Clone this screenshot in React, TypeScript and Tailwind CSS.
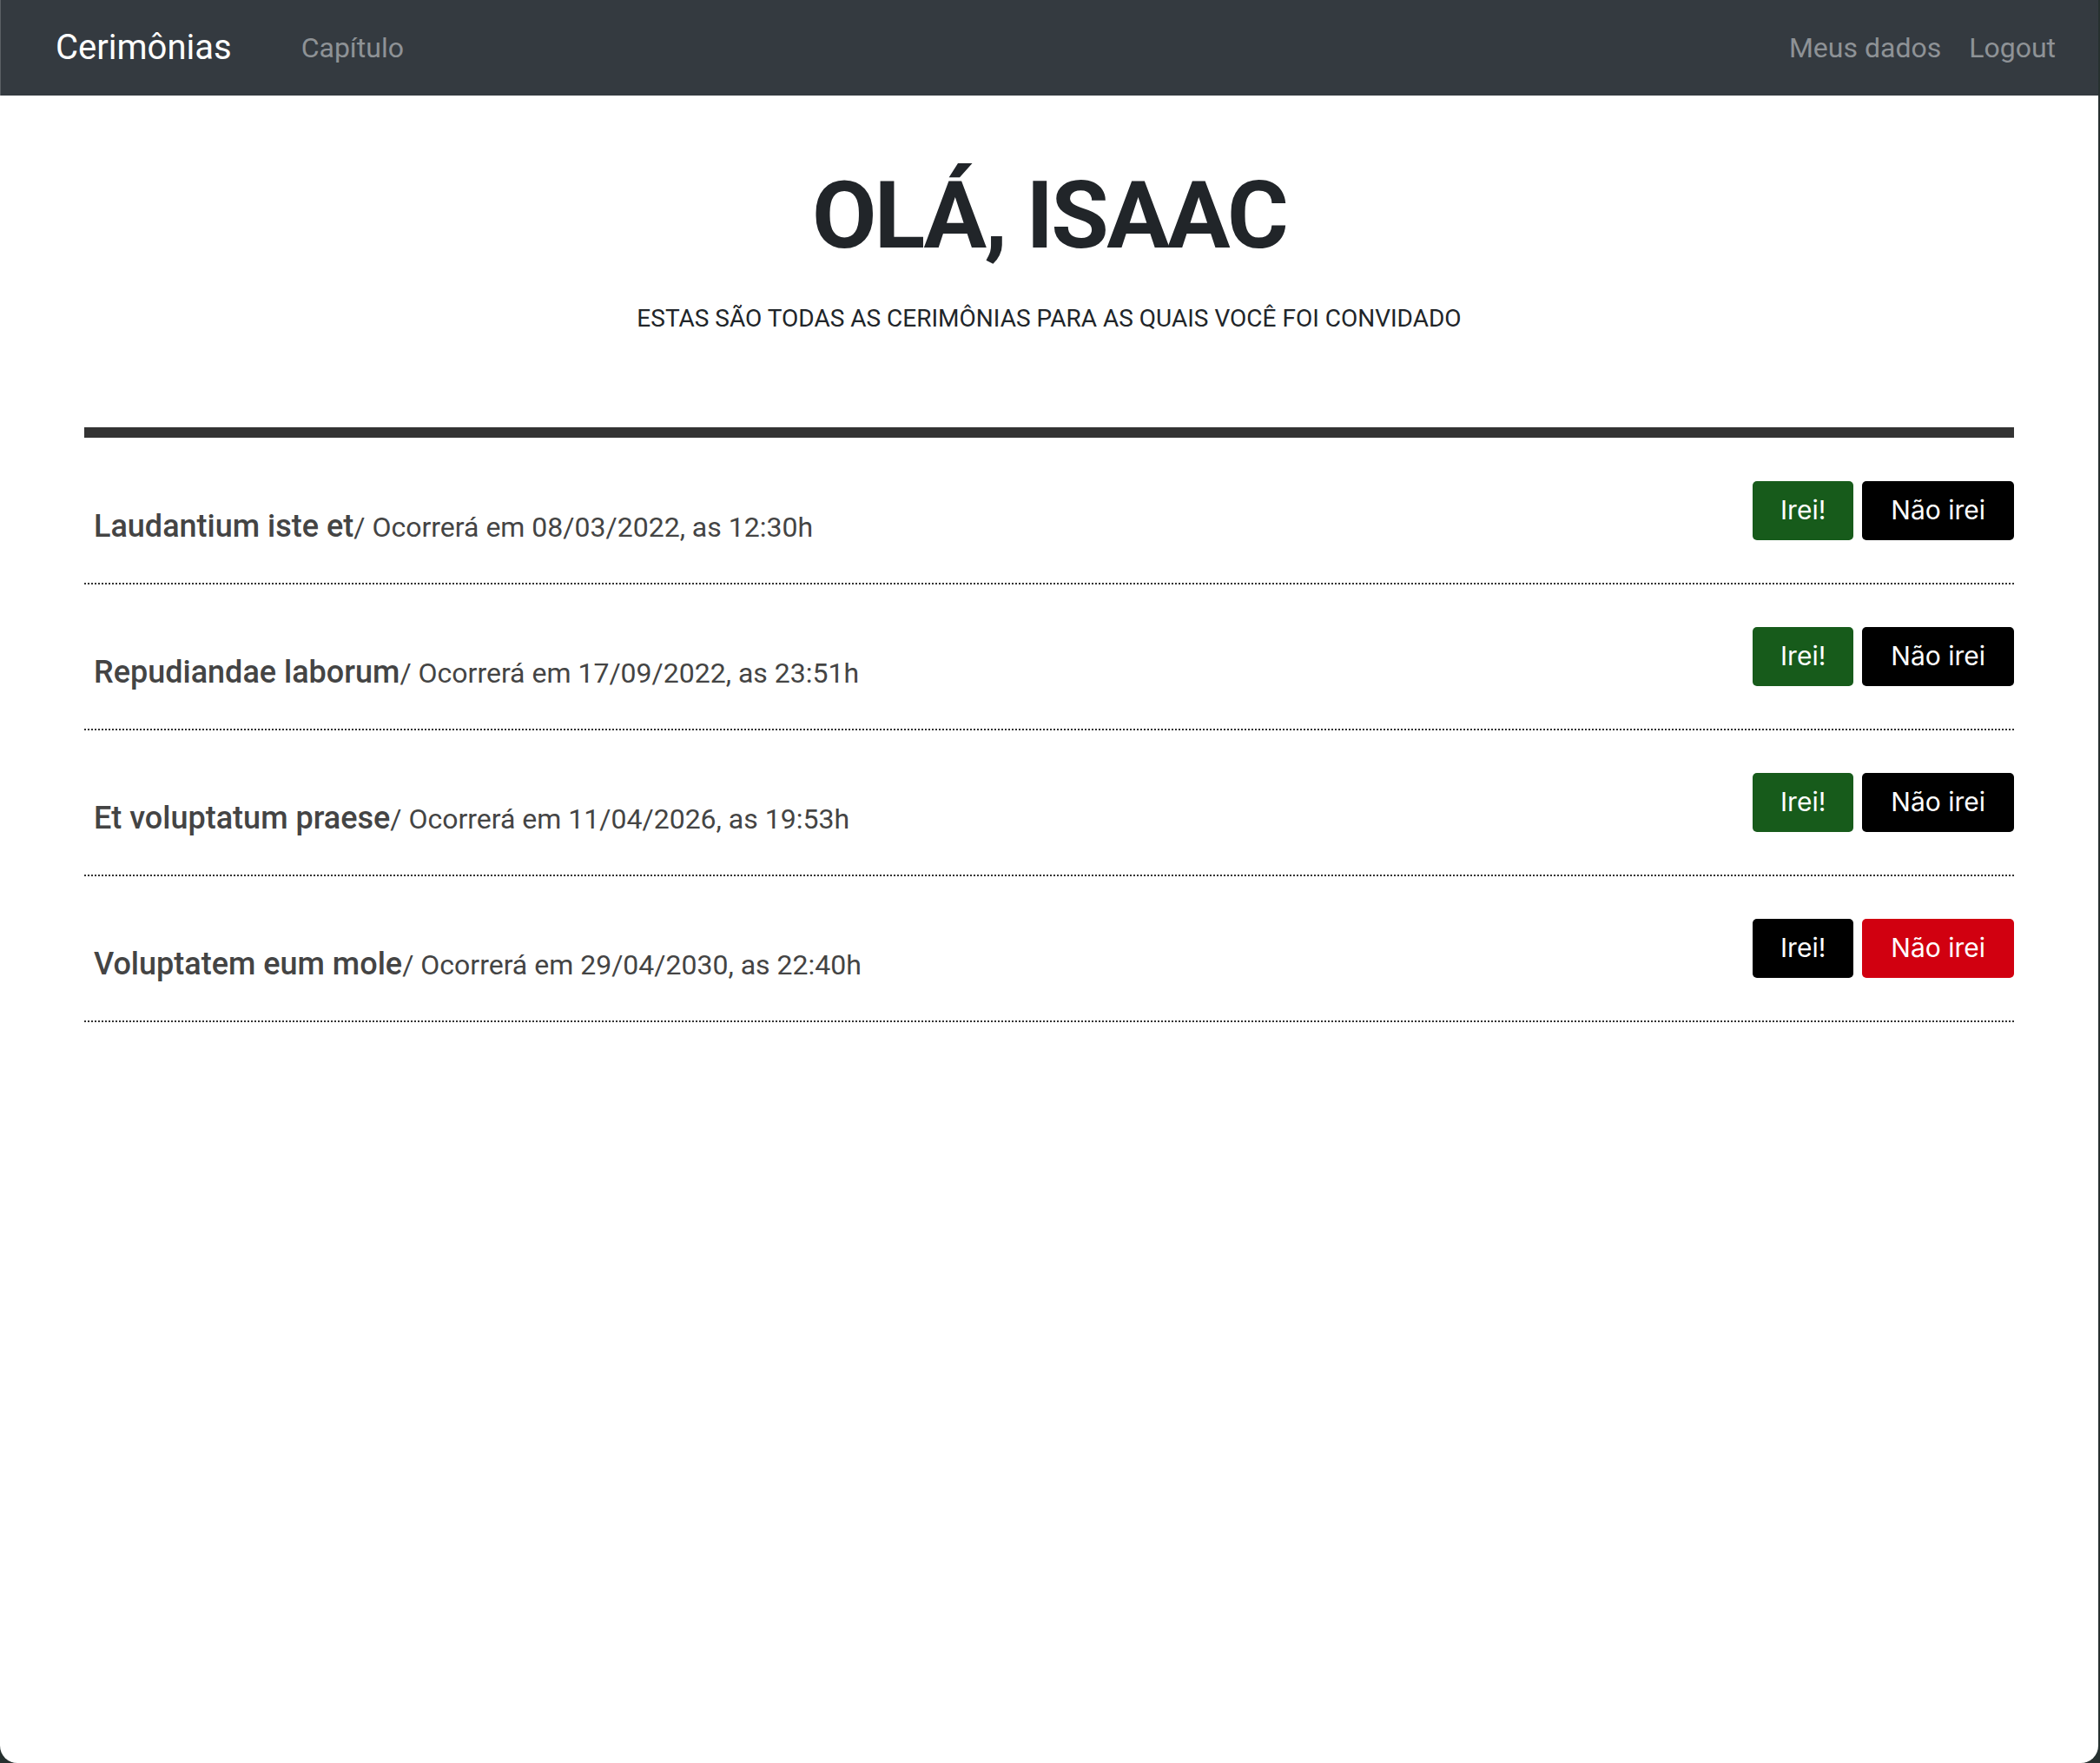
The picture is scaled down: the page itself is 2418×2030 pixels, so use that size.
import React from 'react';

type Ceremony = {
  name: string;
  date: string;
  time: string;
  answer: 'yes' | 'no';
};

const ceremonies: Ceremony[] = [
  { name: 'Laudantium iste et', date: '08/03/2022', time: '12:30h', answer: 'yes' },
  { name: 'Repudiandae laborum', date: '17/09/2022', time: '23:51h', answer: 'yes' },
  { name: 'Et voluptatum praese', date: '11/04/2026', time: '19:53h', answer: 'yes' },
  { name: 'Voluptatem eum mole', date: '29/04/2030', time: '22:40h', answer: 'no' },
];

function Navbar() {
  return (
    <nav className="h-[110px] bg-[#343a40] flex items-center pl-[63px] pr-[49px] border-l border-[#5a5f64]">
      <a className="text-[40px] text-white leading-none">Cerimônias</a>
      <a className="ml-[80px] text-[32px] text-[#8e9296] leading-none">Capítulo</a>
      <div className="ml-auto flex items-center gap-[32px] text-[32px] text-[#8e9296] leading-none">
        <a>Meus dados</a>
        <a>Logout</a>
      </div>
    </nav>
  );
}

function CeremonyRow({ c }: { c: Ceremony }) {
  const going = c.answer === 'yes';
  return (
    <div className="flex items-end justify-between pt-[49px] pb-[49px] border-b-2 border-dotted border-[#333]">
      <div className="pl-[11px] -mb-[2px] leading-none text-[#444]">
        <span className="text-[36px] font-medium">{c.name}</span>
        <span className="text-[32px]">/ Ocorrerá em {c.date}, as {c.time}</span>
      </div>
      <div className="flex gap-[10px] font-['Inter',sans-serif] text-[30px] text-white">
        <button
          className={
            going
              ? 'h-[68px] px-[32px] rounded-[5px] bg-[#175b1b]'
              : 'h-[68px] px-[32px] rounded-[5px] bg-black'
          }
        >
          Irei!
        </button>
        <button
          className={
            going
              ? 'h-[68px] px-[33px] rounded-[5px] bg-black'
              : 'h-[68px] px-[33px] rounded-[5px] bg-[#d10010]'
          }
        >
          Não irei
        </button>
      </div>
    </div>
  );
}

export default function App() {
  return (
    <div className="h-[2030px] w-[2418px] bg-[#26302f] font-['Roboto',sans-serif]">
      <div className="h-full w-[2416px] bg-white rounded-b-[20px] overflow-hidden">
        <Navbar />

        <main className="px-[97px]">
          {/* greeting */}
          <div className="pt-[74px] text-center text-[#212529]">
            <h1 className="text-[108px] font-bold leading-[1.2] tracking-[-0.025em]">OLÁ, ISAAC</h1>
            <p className="mt-[32px] text-[28px] leading-[1.5]">
              ESTAS SÃO TODAS AS CERIMÔNIAS PARA AS QUAIS VOCÊ FOI CONVIDADO
            </p>
          </div>

          <div className="mt-[104px] h-[12px] bg-[#333]"></div>

          {/* list */}
          <div className="mt-[1px]">
            {ceremonies.map((c) => (
              <CeremonyRow key={c.name} c={c} />
            ))}
          </div>
        </main>
      </div>
    </div>
  );
}
